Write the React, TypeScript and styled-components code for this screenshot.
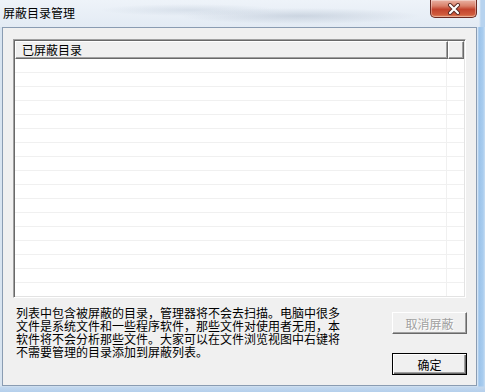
import React, { FC } from 'react';
import styled, { createGlobalStyle } from 'styled-components';

const GlobalStyle = createGlobalStyle`
  html, body {
    margin: 0;
    padding: 0;
    background: #dfe8f2;
  }
  body {
    font-family: "Noto Sans CJK SC", "Noto Sans", sans-serif;
  }
`;

const Window = styled.div`
  width: 485px;
  height: 392px;
  display: flex;
  flex-direction: column;
  overflow: hidden;
  background: linear-gradient(180deg, #e9eff6 0%, #dde7f1 40%, #d4e1ee 100%);
`;

const TitleBar = styled.div`
  height: 27px;
  display: flex;
  justify-content: space-between;
  align-items: flex-start;
  background:
    radial-gradient(ellipse 120px 8px at 300px 16px, rgba(150, 165, 185, 0.35), transparent),
    radial-gradient(ellipse 90px 6px at 190px 10px, rgba(160, 175, 195, 0.25), transparent),
    linear-gradient(90deg, transparent calc(100% - 6px), #b7d3ef calc(100% - 4px)),
    linear-gradient(180deg, #eef3f9 0%, #e3ebf4 100%);
`;

const Title = styled.div`
  padding: 5px 0 0 3px;
  font-size: 12px;
  line-height: 16px;
  color: #000;
`;

const CloseButton = styled.div`
  width: 45px;
  height: 17px;
  margin-right: 8px;
  display: flex;
  align-items: center;
  justify-content: center;
  border: 1px solid #6b2a22;
  border-top: none;
  border-radius: 0 0 5px 5px;
  background: linear-gradient(180deg, #eab2a4 0%, #d9806a 35%, #c3432d 55%, #cf5a3c 85%, #e38a62 100%);
  box-shadow: inset 0 0 0 1px rgba(255, 255, 255, 0.35);
`;

const Frame = styled.div`
  flex: 1;
  display: flex;
  padding: 0 8px 6px 2px;
  background:
    linear-gradient(180deg, transparent calc(100% - 6px), #c3d8ee calc(100% - 5px), #b4cfec 100%),
    linear-gradient(90deg, #d8e4f0 0, #d8e4f0 calc(100% - 8px), #e8f1fa calc(100% - 8px), #9cc3ea calc(100% - 6px), #a9cdef calc(100% - 2px), #c8ddf2 100%);
`;

const Client = styled.div`
  flex: 1;
  display: flex;
  flex-direction: column;
  padding: 11px 10px 0 10px;
  background: #f0f0f0;
  border: 1px solid #8a9cb2;
`;

const ListView = styled.div`
  height: 259px;
  box-sizing: border-box;
  display: flex;
  flex-direction: column;
  background: #fff;
  border-top: 1px solid #a0a0a0;
  border-left: 1px solid #a0a0a0;
  border-right: 1px solid #fff;
  border-bottom: 1px solid #fff;
  box-shadow: inset 1px 1px 0 #696969, inset -1px -1px 0 #e3e3e3;
  padding: 1px;
`;

const HeaderRow = styled.div`
  display: flex;
  height: 18px;
  background: #f0f0f0;
`;

const HeaderCell = styled.div<{ $width?: number }>`
  box-sizing: border-box;
  ${({ $width }) => ($width ? `width: ${$width}px;` : 'flex: 1;')}
  height: 18px;
  padding-left: 6px;
  font-size: 12px;
  line-height: 16px;
  color: #000;
  border-top: 1px solid #fff;
  border-left: 1px solid #fff;
  border-right: 1px solid #696969;
  border-bottom: 1px solid #696969;
  box-shadow: inset -1px -1px 0 #a0a0a0;
`;

const Rows = styled.div`
  flex: 1;
  background-color: #fff;
  background-image:
    linear-gradient(90deg, transparent 431px, #f0f0f0 431px, #f0f0f0 432px, transparent 432px),
    repeating-linear-gradient(180deg, transparent 0, transparent 13px, #f0f0f0 13px, #f0f0f0 14px);
`;

const Bottom = styled.div`
  display: flex;
  justify-content: space-between;
  margin-top: 8px;
`;

const Note = styled.div`
  display: flex;
  flex-direction: column;
  padding-left: 3px;
`;

const NoteLine = styled.div`
  height: 13px;
  font-size: 12px;
  line-height: 13px;
  color: #000;
  white-space: nowrap;
`;

const ButtonColumn = styled.div`
  display: flex;
  flex-direction: column;
  gap: 19px;
  margin-top: 6px;
  margin-right: -1px;
`;

const Button = styled.div<{ $default?: boolean; $disabled?: boolean }>`
  box-sizing: border-box;
  width: 75px;
  height: 22px;
  display: flex;
  align-items: center;
  justify-content: center;
  font-size: 12px;
  background: #f0f0f0;
  color: ${({ $disabled }) => ($disabled ? '#a0a0a0' : '#000')};
  text-shadow: ${({ $disabled }) => ($disabled ? '1px 1px 0 #fff' : 'none')};
  border: 1px solid;
  border-color: ${({ $default }) => ($default ? '#000' : '#fff #696969 #696969 #fff')};
  box-shadow: ${({ $default }) =>
    $default
      ? 'inset 1px 1px 0 #fff, inset -1px -1px 0 #696969, inset -2px -2px 0 #a0a0a0'
      : 'inset -1px -1px 0 #a0a0a0'};
`;

const noteLines = [
  '列表中包含被屏蔽的目录，管理器将不会去扫描。电脑中很多',
  '文件是系统文件和一些程序软件，那些文件对使用者无用，本',
  '软件将不会分析那些文件。大家可以在文件浏览视图中右键将',
  '不需要管理的目录添加到屏蔽列表。',
];

const CloseIcon: FC = () => (
  <svg width="14" height="12" viewBox="0 0 14 12">
    <path d="M3 2 L11 10 M11 2 L3 10" stroke="#5a2a24" strokeWidth="4" strokeLinecap="round" />
    <path d="M3 2 L11 10 M11 2 L3 10" stroke="#fff" strokeWidth="2.2" strokeLinecap="round" />
  </svg>
);

const App: FC = () => {
  return (
    <>
      <GlobalStyle />
      <Window>
        <TitleBar>
          <Title>屏蔽目录管理</Title>
          <CloseButton>
            <CloseIcon />
          </CloseButton>
        </TitleBar>
        <Frame>
          <Client>
            <ListView>
              <HeaderRow>
                <HeaderCell $width={433}>已屏蔽目录</HeaderCell>
                <HeaderCell />
              </HeaderRow>
              <Rows />
            </ListView>
            <Bottom>
              <Note>
                {noteLines.map((line) => (
                  <NoteLine key={line}>{line}</NoteLine>
                ))}
              </Note>
              <ButtonColumn>
                <Button $disabled>取消屏蔽</Button>
                <Button $default>确定</Button>
              </ButtonColumn>
            </Bottom>
          </Client>
        </Frame>
      </Window>
    </>
  );
};

export default App;
